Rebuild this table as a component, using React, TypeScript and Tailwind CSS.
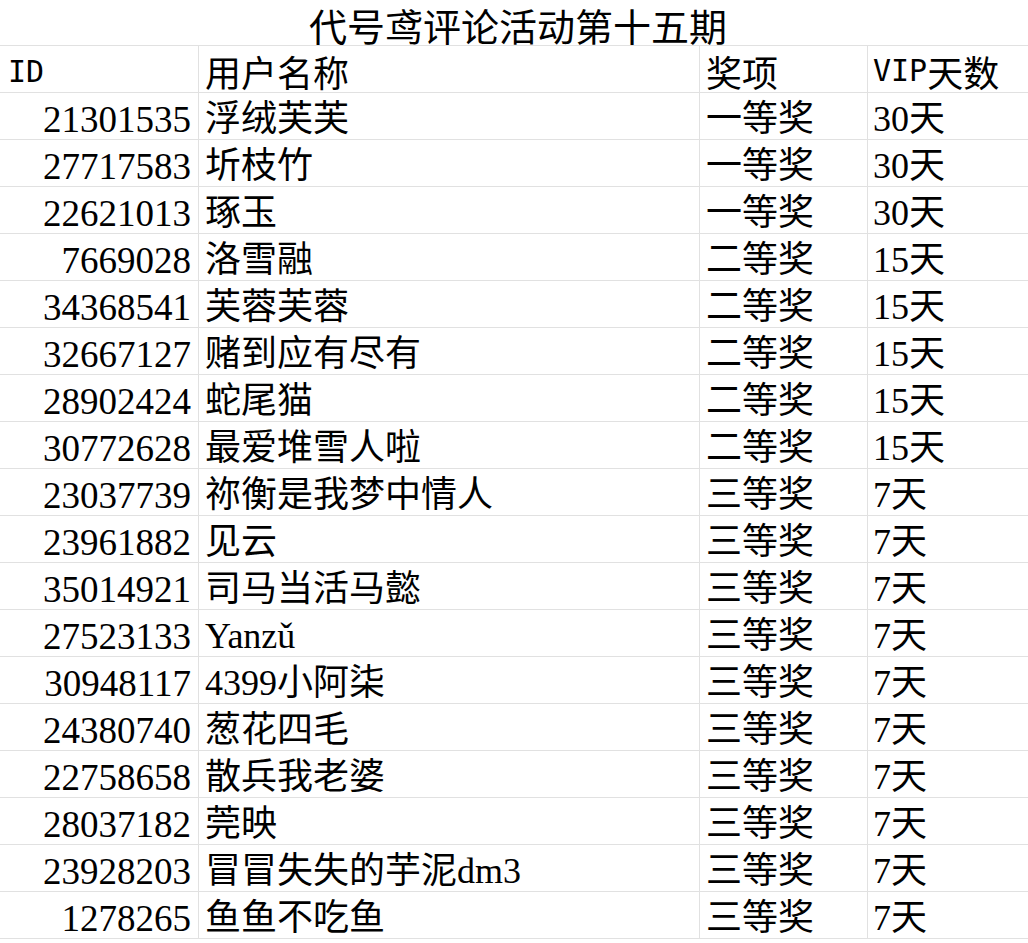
const rows: [string, string, string, string][] = [
  ['21301535', '浮绒芙芙', '一等奖', '30天'],
  ['27717583', '圻枝竹', '一等奖', '30天'],
  ['22621013', '琢玉', '一等奖', '30天'],
  ['7669028', '洛雪融', '二等奖', '15天'],
  ['34368541', '芙蓉芙蓉', '二等奖', '15天'],
  ['32667127', '赌到应有尽有', '二等奖', '15天'],
  ['28902424', '蛇尾猫', '二等奖', '15天'],
  ['30772628', '最爱堆雪人啦', '二等奖', '15天'],
  ['23037739', '祢衡是我梦中情人', '三等奖', '7天'],
  ['23961882', '见云', '三等奖', '7天'],
  ['35014921', '司马当活马懿', '三等奖', '7天'],
  ['27523133', 'Yanzǔ', '三等奖', '7天'],
  ['30948117', '4399小阿柒', '三等奖', '7天'],
  ['24380740', '葱花四毛', '三等奖', '7天'],
  ['22758658', '散兵我老婆', '三等奖', '7天'],
  ['28037182', '莞映', '三等奖', '7天'],
  ['23928203', '冒冒失失的芋泥dm3', '三等奖', '7天'],
  ['1278265', '鱼鱼不吃鱼', '三等奖', '7天'],
]

const serif = "font-['Liberation_Serif','Noto_Sans_CJK_SC',serif]"
const sans = "font-['Noto_Sans_CJK_SC',sans-serif]"
const mono = "font-['DejaVu_Sans_Mono',monospace] text-[30px]"

const cell = 'h-[47px] flex items-center border-b border-r border-[#e1e1e1] whitespace-nowrap leading-none'

export default function App() {
  return (
    <div className="w-[1028px] h-[943px] overflow-hidden bg-white text-black">
      <div className={`h-[46px] flex items-center justify-center border-b border-[#e1e1e1] text-[38px] leading-none pl-[8px] pt-[4px] ${sans}`}>
        代号鸢评论活动第十五期
      </div>
      <div className="grid grid-cols-[199px_501px_168px_170px] w-[1038px]">
        <div className={`${cell} pl-[8px] pt-[6px] ${mono}`}>ID</div>
        <div className={`${cell} pl-[6px] pt-[4px] text-[36px] ${sans}`}>用户名称</div>
        <div className={`${cell} pl-[6px] pt-[4px] text-[36px] ${sans}`}>奖项</div>
        <div className={`${cell} pl-[5px] pt-[4px] text-[36px] ${sans}`}>
          <span className={mono}>VIP</span>天数
        </div>
        {rows.map(([id, name, prize, days]) => (
          <div key={id} className="contents">
            <div className={`${cell} justify-end pr-[7px] pt-[6px] text-[37px] ${serif}`}>{id}</div>
            <div className={`${cell} pl-[6px] pt-[5px] text-[36px] ${serif}`}>{name}</div>
            <div className={`${cell} pl-[6px] pt-[5px] text-[36px] ${serif}`}>{prize}</div>
            <div className={`${cell} pl-[5px] pt-[5px] text-[36px] ${serif}`}>{days}</div>
          </div>
        ))}
      </div>
    </div>
  )
}
